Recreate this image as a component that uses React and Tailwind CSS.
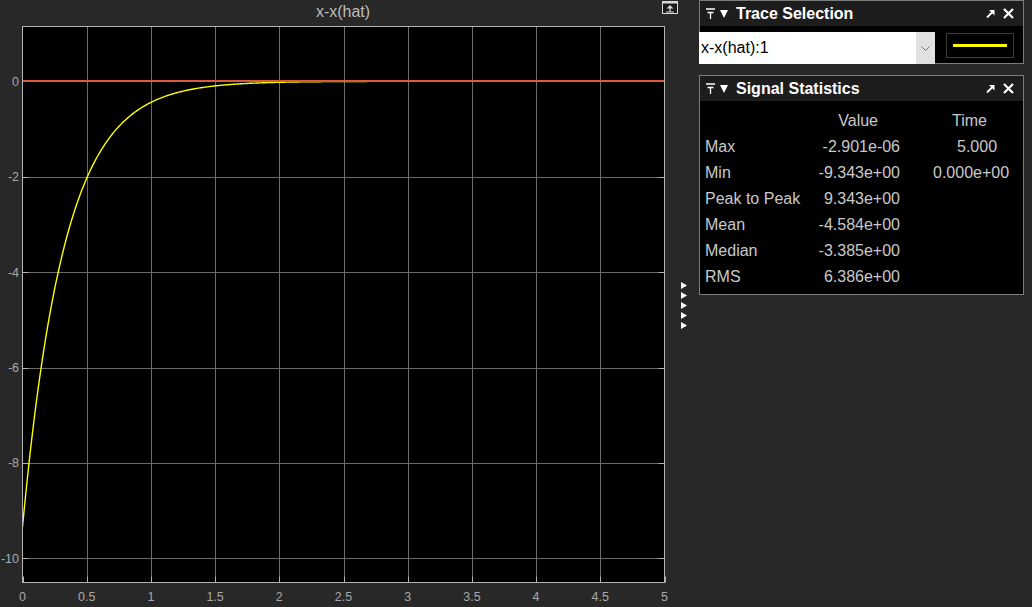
import React from 'react';

/**
 * Scope-style view: a time plot on the left, Trace Selection and
 * Signal Statistics panels on the right.
 */

const PLOT_W = 642;
const PLOT_H = 556;
const X0 = 22.5;
const Y0 = 0.5;
const PX_PER_T = PLOT_W / 5;
const PX_PER_V = 47.7;
const ZERO_Y = 55.3;

const px = (t) => X0 + t * PX_PER_T;
const py = (v) => ZERO_Y - v * PX_PER_V;

const xTicks = [0, 0.5, 1, 1.5, 2, 2.5, 3, 3.5, 4, 4.5, 5];
const yTicks = [0, -2, -4, -6, -8, -10];

function curvePoints() {
  const pts = [];
  for (let i = 0; i <= 500; i++) {
    const t = i / 100;
    const v = -9.343 * Math.exp(-3.05 * t);
    pts.push(`${px(t).toFixed(2)},${py(v).toFixed(2)}`);
  }
  return pts.join(' ');
}

function Plot() {
  return (
    <svg width="670" height="581" className="block">
      <defs>
        <clipPath id="plot-clip">
          <rect x={X0} y={Y0} width={PLOT_W} height={PLOT_H} />
        </clipPath>
      </defs>
      <rect x={X0} y={Y0} width={PLOT_W} height={PLOT_H} fill="#000" />
      {/* grid */}
      {xTicks.slice(1, -1).map((t) => (
        <line key={`gx${t}`} x1={Math.round(px(t)) + 0.5} x2={Math.round(px(t)) + 0.5} y1={Y0} y2={Y0 + PLOT_H} stroke="#6b6b6b" strokeWidth="1" />
      ))}
      {yTicks.map((v) => (
        <line key={`gy${v}`} x1={X0} x2={X0 + PLOT_W} y1={Math.round(py(v)) + 0.5} y2={Math.round(py(v)) + 0.5} stroke="#6b6b6b" strokeWidth="1" />
      ))}
      {/* tick marks */}
      {yTicks.map((v) => (
        <g key={`ty${v}`}>
          <line x1={X0} x2={X0 + 6} y1={Math.round(py(v)) + 0.5} y2={Math.round(py(v)) + 0.5} stroke="#b4b4b4" />
          <line x1={X0 + PLOT_W - 6} x2={X0 + PLOT_W} y1={Math.round(py(v)) + 0.5} y2={Math.round(py(v)) + 0.5} stroke="#b4b4b4" />
        </g>
      ))}
      {xTicks.map((t) => (
        <line key={`tx${t}`} x1={Math.round(px(t)) + 0.5} x2={Math.round(px(t)) + 0.5} y1={Y0 + PLOT_H - 6} y2={Y0 + PLOT_H} stroke="#b4b4b4" />
      ))}
      <g clipPath="url(#plot-clip)">
        <polyline points={curvePoints()} fill="none" stroke="#ffff00" strokeWidth="1.4" />
        <line x1={X0} x2={X0 + PLOT_W} y1="55" y2="55" stroke="#d95b3b" strokeWidth="2" />
      </g>
      <rect x={X0} y={Y0} width={PLOT_W} height={PLOT_H} fill="none" stroke="#b4b4b4" strokeWidth="1" />
      {/* tick labels */}
      <g fill="#a8a8a8" fontFamily="'Liberation Sans', Arial, sans-serif" fontSize="12.5">
        {yTicks.map((v) => (
          <text key={`ly${v}`} x="19" y={py(v) + 4.5} textAnchor="end">{v}</text>
        ))}
        {xTicks.map((t) => (
          <text key={`lx${t}`} x={px(t)} y="574.5" textAnchor="middle">{t}</text>
        ))}
      </g>
    </svg>
  );
}

function PinIcon() {
  return (
    <svg width="9" height="11" viewBox="0 0 9 11">
      <path d="M0 1H9M1.5 4.5H7.5M4.5 4.5V11" stroke="#fff" strokeWidth="1.3" fill="none" />
    </svg>
  );
}

function DownTriangle() {
  return (
    <svg width="8" height="9" viewBox="0 0 8 9">
      <polygon points="0,1 8,1 4,9" fill="#fff" />
    </svg>
  );
}

function UndockArrow() {
  return (
    <svg width="9" height="9" viewBox="0 0 9 9">
      <path d="M1 8.5L6 3.5" stroke="#fff" strokeWidth="1.8" />
      <polygon points="3,1 8.5,1 8.5,6.5" fill="#fff" />
    </svg>
  );
}

function CloseIcon() {
  return (
    <svg width="11" height="11" viewBox="0 0 11 11">
      <path d="M1 1L10 10M10 1L1 10" stroke="#fff" strokeWidth="2.2" />
    </svg>
  );
}

function PanelHeader({ title }) {
  return (
    <div className="flex h-[25px] items-center bg-[#1d1d1d] pl-[6px] pr-[9px]">
      <PinIcon />
      <span className="ml-[5px]">
        <DownTriangle />
      </span>
      <span className="ml-[8px] text-[16px] font-bold leading-none text-white">{title}</span>
      <span className="ml-auto flex items-center gap-[8px]">
        <UndockArrow />
        <CloseIcon />
      </span>
    </div>
  );
}

const stats = [
  { label: 'Max', value: '-2.901e-06', time: '5.000', timePad: 'pl-[57px]' },
  { label: 'Min', value: '-9.343e+00', time: '0.000e+00', timePad: 'pl-[33px]' },
  { label: 'Peak to Peak', value: '9.343e+00' },
  { label: 'Mean', value: '-4.584e+00' },
  { label: 'Median', value: '-3.385e+00' },
  { label: 'RMS', value: '6.386e+00' },
];

function TraceSelection() {
  return (
    <div className="h-[64px] border border-[#7c7c7c] bg-black">
      <PanelHeader title="Trace Selection" />
      <div className="mt-[6px] flex -ml-px">
        <div className="flex h-[32px] w-[236px] bg-white">
          <span className="flex-1 pl-[2px] text-[16px] leading-[32px] text-black">x-x(hat):1</span>
          <span className="flex w-[19px] items-center justify-center bg-[#e1e1e1]">
            <svg width="9" height="5" viewBox="0 0 9 5">
              <path d="M0.5 0.5L4.5 4.5L8.5 0.5" stroke="#707070" fill="none" />
            </svg>
          </span>
        </div>
        <div className="ml-[11px] mt-px flex h-[25px] w-[68px] items-center justify-center border border-[#3c3c3c]">
          <div className="h-[3px] w-[54px] bg-[#ffff00]" />
        </div>
      </div>
    </div>
  );
}

function SignalStatistics() {
  return (
    <div className="mt-[11px] border border-[#7c7c7c] bg-black">
      <PanelHeader title="Signal Statistics" />
      <div className="pb-[4px] pl-[5px] pt-[7px] text-[16px] leading-[26px] text-[#c9c9c9]">
        <div className="flex">
          <span className="w-[108px]" />
          <span className="w-[87px] pr-[22px] text-right">Value</span>
          <span className="pl-[52px]">Time</span>
        </div>
        {stats.map((row) => (
          <div key={row.label} className="flex">
            <span className="w-[108px]">{row.label}</span>
            <span className="w-[87px] text-right">{row.value}</span>
            {row.time && <span className={row.timePad}>{row.time}</span>}
          </div>
        ))}
      </div>
    </div>
  );
}

function PlotUndockIcon() {
  return (
    <svg width="16" height="13" viewBox="0 0 16 13">
      <rect x="0.5" y="0.5" width="15" height="12" fill="#1a1a1a" stroke="#d8d8d8" />
      <rect x="0" y="0" width="16" height="2.5" fill="#d8d8d8" />
      <polygon points="8,4 4.5,7.5 11.5,7.5" fill="#d8d8d8" />
      <path d="M8 7V11M4 11H12" stroke="#d8d8d8" strokeWidth="1.2" />
    </svg>
  );
}

function SideTriangles() {
  return (
    <div className="flex flex-col gap-[3px]">
      {[0, 1, 2, 3, 4].map((i) => (
        <svg key={i} width="6" height="7" viewBox="0 0 6 7">
          <polygon points="0,0 6,3.5 0,7" fill="#fff" />
        </svg>
      ))}
    </div>
  );
}

export default function App() {
  return (
    <div
      className="flex h-[607px] w-[1032px] overflow-hidden bg-[#282828]"
      style={{ fontFamily: "'Liberation Sans', Arial, sans-serif" }}
    >
      {/* Plot column */}
      <div className="flex w-[670px] flex-col">
        <div className="ml-[22px] h-[26px] w-[642px] text-center text-[16px] leading-[24px] text-[#bdbdbd]">
          x-x(hat)
        </div>
        <Plot />
      </div>

      {/* Narrow gutter */}
      <div className="flex w-[29px] flex-col">
        <div className="-ml-[8px] mt-px">
          <PlotUndockIcon />
        </div>
        <div className="ml-[11px] mt-[268px]">
          <SideTriangles />
        </div>
      </div>

      {/* Right panels */}
      <div className="w-[325px]">
        <TraceSelection />
        <SignalStatistics />
      </div>
    </div>
  );
}
